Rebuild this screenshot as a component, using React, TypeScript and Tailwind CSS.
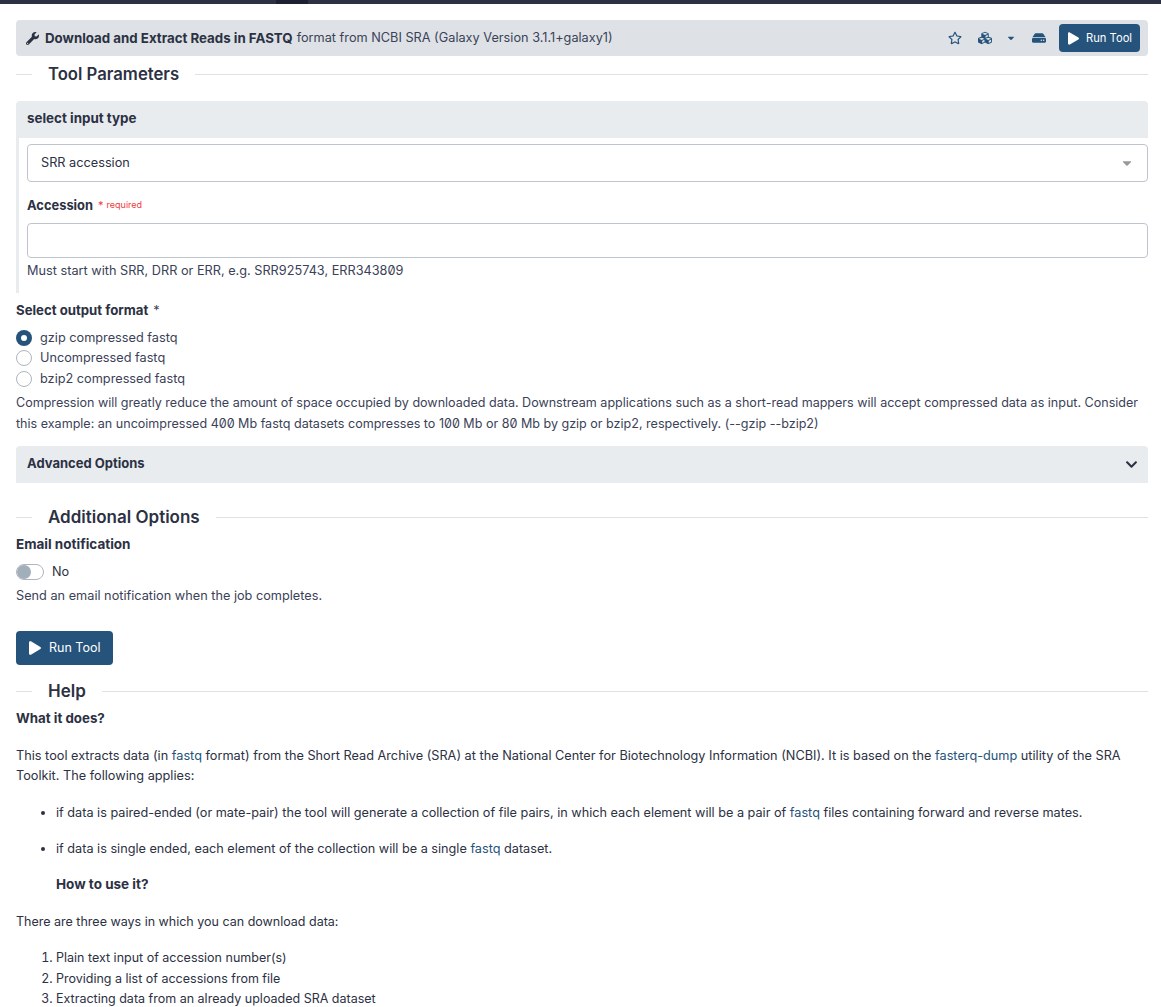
import React from 'react';
import { FaWrench, FaRegStar, FaCubes, FaCaretDown, FaHdd, FaPlay, FaChevronDown } from 'react-icons/fa';

function SectionTitle({ title, className, size }: { title: string; className?: string; size?: string }) {
    return (
        <div className={`flex items-center ${className ?? ''}`}>
            <div className="w-4 h-px bg-[#dee2e6]" />
            <h2 className={`px-4 leading-[20px] font-semibold text-[#2c3143] ${size ?? 'text-[17px]'}`}>{title}</h2>
            <div className="flex-1 h-px bg-[#dee2e6]" />
        </div>
    );
}

function Radio({ label, checked }: { label: string; checked?: boolean }) {
    return (
        <label className="flex items-center gap-2 h-[20.5px]">
            {checked ? (
                <span className="w-4 h-4 rounded-full bg-[#25537b] flex items-center justify-center">
                    <span className="w-[6px] h-[6px] rounded-full bg-white" />
                </span>
            ) : (
                <span className="w-4 h-4 rounded-full border border-[#adb5bd] bg-white" />
            )}
            <span>{label}</span>
        </label>
    );
}

function RunButton({ small }: { small?: boolean }) {
    return (
        <button className={`flex items-center rounded bg-[#25537b] text-white ${small ? 'h-[28px] w-[81px] pl-[9px] gap-[7px] text-[11.2px]' : 'h-[34px] w-[97px] pl-[13px] gap-[8px] text-[12.5px]'}`}>
            <FaPlay className={small ? 'w-[11px] h-[13px]' : 'w-[12px] h-[14px]'} />
            Run Tool
        </button>
    );
}

export default function App() {
    return (
        <div className="bg-white h-[1007px] overflow-hidden font-['Inter',sans-serif] slashed-zero text-[12.72px] leading-[20px] text-[#2c3143]">
            {/* top bar */}
            <div className="h-1 bg-[#2c3143] flex">
                <div className="ml-[276px] w-[32px] bg-[#1c2030]" />
            </div>

            <div className="pl-4 pr-[13px] pt-4">
                {/* tool header */}
                <div className="h-9 rounded bg-[#dee2e6] flex items-center pl-[10px] pr-2">
                    <FaWrench className="w-[13px] h-[13px] mr-[6px]" />
                    <span className="font-bold text-[13.3px]">Download and Extract Reads in FASTQ</span>
                    <span className="ml-1 text-[#3b4258]">format from NCBI SRA (Galaxy Version 3.1.1+galaxy1)</span>
                    <div className="ml-auto flex items-center text-[#25537b]">
                        <FaRegStar className="w-[14px] h-[14px] mr-[16px]" />
                        <FaCubes className="w-[14px] h-[14px] mr-[14px]" />
                        <FaCaretDown className="w-[10px] h-[10px] mr-[16px]" />
                        <FaHdd className="w-[14px] h-[14px] mr-[13px]" />
                        <RunButton small />
                    </div>
                </div>

                <SectionTitle title="Tool Parameters" className="mt-2" size="text-[16.7px]" />

                {/* conditional input */}
                <div className="mt-[17px] rounded-t bg-[#e9ecef] h-[37px] flex items-center px-[11px] pb-[3px] font-bold text-[13.4px]">select input type</div>
                <div className="border-l-[3px] border-[#e9ecef] pl-2 pt-[6px] h-[155px]">
                    <div className="h-[38px] border border-[#bfc5cd] rounded flex items-center pl-[13px] pr-[13px]">
                        <span className="pb-px">SRR accession</span>
                        <FaCaretDown className="ml-auto w-[14px] h-[14px] text-[#999]" />
                    </div>
                    <div className="mt-[14px] flex items-start h-[20px]">
                        <span className="font-bold text-[12.9px]">Accession</span>
                        <span className="ml-[5px] text-[#ef3a3a] text-[11px] leading-[18px]">*</span>
                        <span className="ml-[3px] text-[#ef3a3a] text-[9px] leading-[17px]">required</span>
                    </div>
                    <div className="mt-[7px] h-[35px] border border-[#bfc5cd] rounded" />
                    <p className="mt-[3px] text-[#3b4258]">Must start with SRR, DRR or ERR, e.g. SRR925743, ERR343809</p>
                </div>

                {/* output format */}
                <div className="mt-[7px] h-[20px]">
                    <span className="font-bold text-[13.2px]">Select output format</span>
                    <span className="ml-[5px] text-[#3b4258]">*</span>
                </div>
                <div className="mt-[7.5px] text-[#3b4258]">
                    <Radio label="gzip compressed fastq" checked />
                    <Radio label="Uncompressed fastq" />
                    <Radio label="bzip2 compressed fastq" />
                </div>
                <p className="mt-[3px] text-[12.55px] text-[#3b4258] leading-[21px]">
                    Compression will greatly reduce the amount of space occupied by downloaded data. Downstream applications such as a short-read mappers will accept compressed data as input. Consider this example: an uncoimpressed 400 Mb fastq datasets compresses to 100 Mb or 80 Mb by gzip or bzip2, respectively. (--gzip --bzip2)
                </p>

                <div className="mt-[12px] h-[37px] rounded-t bg-[#e9ecef] flex items-center justify-between pl-[11px] pr-[10px] font-bold text-[13px]">
                    <span className="pb-[3px]">Advanced Options</span>
                    <FaChevronDown className="w-[13px] h-[13px]" />
                </div>

                <SectionTitle title="Additional Options" className="mt-[24px]" />

                {/* email */}
                <div className="mt-[7px] font-bold text-[13.5px]">Email notification</div>
                <div className="mt-[8px] flex items-center gap-2 h-[20px]">
                    <span className="w-[28px] h-4 rounded-full border border-[#adb5bd] bg-white flex items-center">
                        <span className="w-[14px] h-[14px] rounded-full bg-[#a3aebb]" />
                    </span>
                    <span>No</span>
                </div>
                <p className="mt-[4px] text-[#3b4258]">Send an email notification when the job completes.</p>

                <div className="mt-[25px]">
                    <RunButton />
                </div>

                <SectionTitle title="Help" className="mt-[16px]" />

                {/* help */}
                <p className="mt-[7px] font-bold text-[13.3px]">What it does?</p>
                <p className="mt-[18px]">
                    This tool extracts data (in <a className="text-[#25537b]">fastq</a> format) from the Short Read Archive (SRA) at the National Center for Biotechnology Information (NCBI). It is based on the <a className="text-[#25537b]">fasterq-dump</a> utility of the SRA Toolkit. The following applies:
                </p>
                <ul className="mt-[17px] list-disc pl-10 text-[12.68px]">
                    <li>if data is paired-ended (or mate-pair) the tool will generate a collection of file pairs, in which each element will be a pair of <a className="text-[#25537b]">fastq</a> files containing forward and reverse mates.</li>
                    <li className="mt-4">if data is single ended, each element of the collection will be a single <a className="text-[#25537b]">fastq</a> dataset.</li>
                </ul>
                <p className="mt-[15px] pl-10 font-bold text-[13.5px]">How to use it?</p>
                <p className="mt-[18px] text-[12.5px]">There are three ways in which you can download data:</p>
                <ol className="mt-[16px] list-decimal pl-10 leading-[20.5px] text-[12.5px]">
                    <li>Plain text input of accession number(s)</li>
                    <li>Providing a list of accessions from file</li>
                    <li>Extracting data from an already uploaded SRA dataset</li>
                </ol>
            </div>
        </div>
    );
}
